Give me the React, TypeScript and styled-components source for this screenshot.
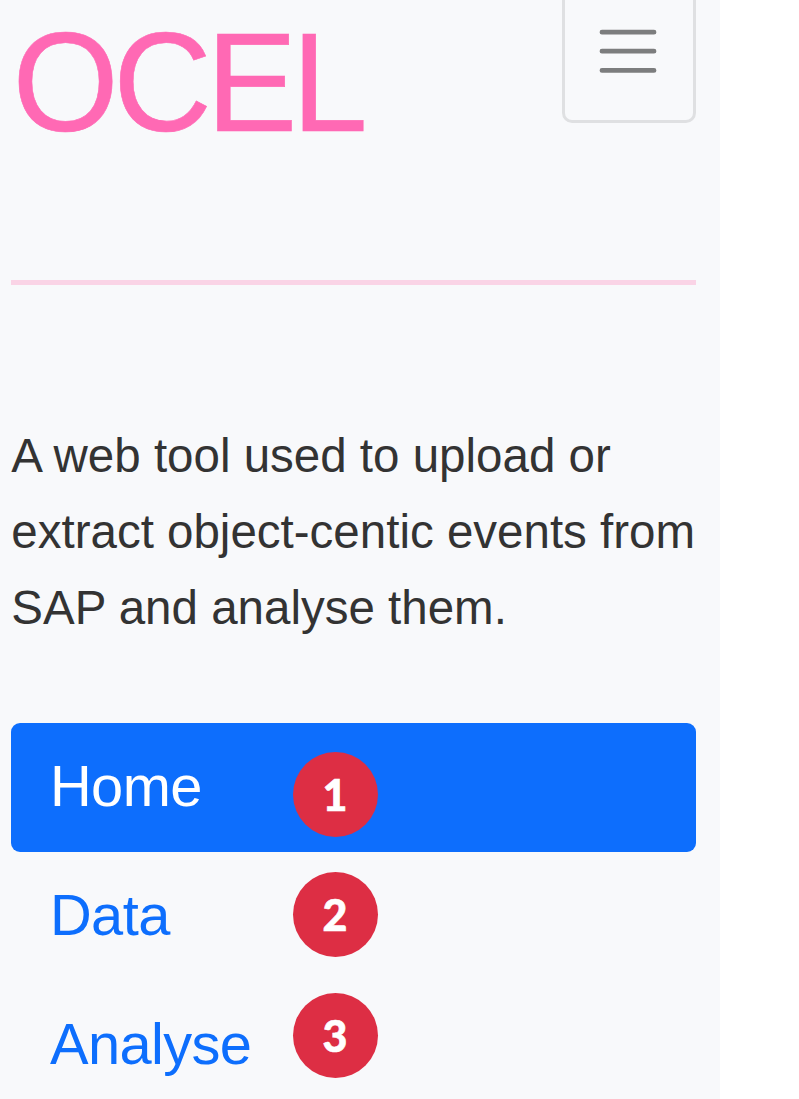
import React from "react";
import styled, { createGlobalStyle } from "styled-components";

const Global = createGlobalStyle`
  * { box-sizing: border-box; }
  body { margin: 0; background: #fff; overflow: hidden; font-family: "Liberation Sans", Arial, sans-serif; }
`;

const Sidebar = styled.aside`
  width: 720px;
  height: 1099px;
  padding: 0 24.5px 0 11.3px;
  background: #f8f9fb;
  overflow: hidden;
`;

const Header = styled.header`
  display: flex;
  justify-content: space-between;
  align-items: flex-start;
  height: 280px;
`;

const Title = styled.h1`
  margin: 0;
  padding: 4px 0 0 1.5px;
  font-size: 141.5px;
  font-weight: 400;
  line-height: 157px;
  letter-spacing: -5.7px;
  color: #ff69b4;
  -webkit-text-stroke: 0.6px #ff69b4;
  transform: scaleX(0.965);
  transform-origin: left;
`;

const Toggler = styled.button`
  display: flex;
  justify-content: center;
  width: 134px;
  height: 135px;
  margin: -12px 0 0;
  padding: 35px 2px 0 0;
  border: 3px solid #dfe0e2;
  border-radius: 10px;
  background: transparent;
`;

const Rule = styled.hr`
  height: 5px;
  margin: 0;
  border: 0;
  background: #fad4e6;
`;

const Description = styled.p`
  margin: 133px 0 0;
  font-size: 47.5px;
  line-height: 76px;
  white-space: nowrap;
  color: #333;
`;

const Nav = styled.nav`
  display: flex;
  flex-direction: column;
  margin-top: 77px;
`;

const NavItem = styled.a<{ $active?: boolean }>`
  display: grid;
  grid-template-columns: 243px 85px;
  align-items: start;
  height: 129px;
  padding-left: 38.7px;
  border-radius: 9px;
  font-size: 57.8px;
  letter-spacing: -0.6px;
  line-height: 127px;
  color: ${(p) => (p.$active ? "#fff" : "#0d6efd")};
  background: ${(p) => (p.$active ? "#0d6efd" : "transparent")};
`;

const Badge = styled.span<{ $top: number }>`
  width: 85px;
  height: 85px;
  margin-top: ${(p) => p.$top}px;
  padding-right: 1px;
  border-radius: 50%;
  background: #dd2e44;
  color: #fff;
  font: 900 43px/85px Lato, sans-serif;
  -webkit-text-stroke: 0.6px #fff;
  letter-spacing: 0;
  text-align: center;
`;

const items = [
  { label: "Home", top: 29 },
  { label: "Data", top: 20 },
  { label: "Analyse", top: 12 },
];

export default function App() {
  return (
    <>
      <Global />
      <Sidebar>
        <Header>
          <Title>OCEL</Title>
          <Toggler aria-label="Menu">
            <svg width="60" height="50" viewBox="0 0 60 50" stroke="#7c7d7e" strokeWidth="4.8" strokeLinecap="round">
              <path d="M4 6.2H56M4 25.2H56M4 44.4H56" />
            </svg>
          </Toggler>
        </Header>
        <Rule />
        <Description>
          A web tool used to upload or<br />
          extract object-centic events from<br />
          SAP and analyse them.
        </Description>
        <Nav>
          {items.map((item, i) => (
            <NavItem key={item.label} $active={i === 0}>
              <span>{item.label}</span>
              <Badge $top={item.top}>{i + 1}</Badge>
            </NavItem>
          ))}
        </Nav>
      </Sidebar>
    </>
  );
}
